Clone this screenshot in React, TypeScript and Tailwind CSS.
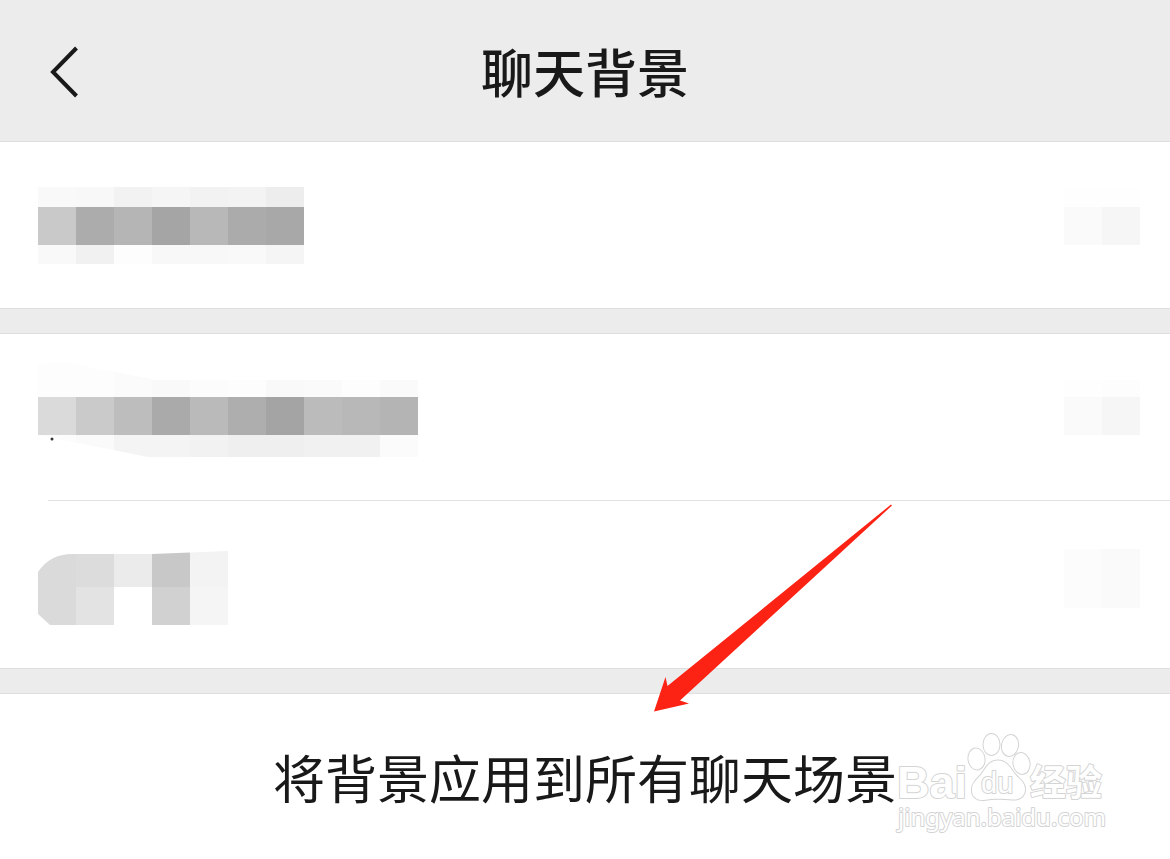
import React from 'react';

type Cell = [x: number, y: number, width: number, height: number, fill: string];

// Lays a line of 38px cells, one per colour
const strip = (x: number, y: number, height: number, fills: string[]): Cell[] =>
  fills.map((fill, i) => [x + i * 38, y, 38, height, fill]);

const albumLabel: Cell[] = [
  ...strip(0, 19, 20, ['#f9f9f9', '#f8f8f8', '#f2f2f2', '#f5f5f5', '#f2f2f2', '#f3f3f3', '#ededed']),
  ...strip(0, 39, 38, ['#c9c9c9', '#acacac', '#b5b5b5', '#a5a5a5', '#b8b8b8', '#ababab', '#a8a8a8']),
  ...strip(0, 77, 19, ['#f9f9f9', '#f1f1f1', '#fdfdfd', '#f8f8f8', '#f8f8f8', '#f9f9f9', '#f5f5f5']),
];

const photoLabel: Cell[] = [
  ...strip(0, 0, 37, ['#fdfdfd', '#fdfdfd', '#fbfbfb']),
  ...strip(114, 20, 17, ['#f9f9f9', '#fcfcfc', '#fdfdfd', '#f9f9f9', '#fafafa', '#fdfdfd', '#fafafa']),
  ...strip(0, 37, 38, [
    '#dadada', '#cacaca', '#bdbdbd', '#aaaaaa', '#bababa',
    '#aeaeae', '#a4a4a4', '#bbbbbb', '#b8b8b8', '#b4b4b4',
  ]),
  ...strip(0, 75, 22, [
    '#fcfcfc', '#fafafa', '#f4f4f4', '#f4f4f4', '#f2f2f2',
    '#efefef', '#efefef', '#f1f1f1', '#f1f1f1', '#fbfbfb',
  ]),
];

const cameraLabel: Cell[] = [
  ...strip(0, 24, 36, ['#dadada', '#dcdcdc', '#ebebeb', '#c8c8c8', '#f3f3f3']),
  ...strip(0, 60, 38, ['#dadada', '#e3e3e3', '#ffffff', '#d1d1d1', '#f5f5f5']),
];

const Mosaic: React.FC<{
  cells: Cell[];
  width: number;
  height?: number;
  clip?: string;
  id?: string;
  children?: React.ReactNode;
}> = ({ cells, width, height = 114, clip, id, children }) => (
  <svg width={width} height={height} viewBox={`0 0 ${width} ${height}`} className="shrink-0" aria-hidden="true">
    {clip && (
      <clipPath id={id}>
        <path d={clip} />
      </clipPath>
    )}
    <g clipPath={clip ? `url(#${id})` : undefined} shapeRendering="crispEdges">
      {cells.map(([x, y, w, h, fill]) => (
        <rect key={`${x}-${y}`} x={x} y={y} width={w} height={h} fill={fill} />
      ))}
    </g>
    {children}
  </svg>
);

const Row: React.FC<{ children: React.ReactNode }> = ({ children }) => (
  <li className="flex items-center justify-between py-[26px] pr-[30px] pl-[38px]">{children}</li>
);

const Divider: React.FC = () => <div className="h-[26px] border-y border-[#dedede] bg-[#ececec]" />;

const Arrow: React.FC = () => (
  <svg
    width="240"
    height="210"
    viewBox="0 0 240 210"
    className="pointer-events-none absolute top-[503px] left-1/2 ml-[68px]"
    aria-hidden="true"
  >
    <path d="M1 208.5 L12.5 174 L14.5 183 L238 1.5 L239 2.5 L27 197.5 L36 200.5 Z" fill="#fc2214" />
  </svg>
);

const Watermark: React.FC = () => (
  <svg
    width="216"
    height="106"
    viewBox="0 0 216 106"
    className="pointer-events-none absolute right-[62px] bottom-[22px]"
    fill="#ffffff"
    stroke="#d4d4d4"
    strokeWidth="2"
    strokeLinejoin="round"
    style={{ paintOrder: 'stroke' }}
  >
    <text x="5" y="67" fontSize="45" fontWeight="700" fontFamily='"Liberation Sans", Arial, sans-serif'>
      Bai
    </text>
    <g>
      <ellipse cx="84.5" cy="28" rx="8" ry="10.5" transform="rotate(-8 84.5 28)" />
      <ellipse cx="99.5" cy="13.5" rx="8" ry="10.5" />
      <ellipse cx="118" cy="14.5" rx="8" ry="10.5" transform="rotate(12 118 14.5)" />
      <ellipse cx="129.5" cy="32.500" rx="8" ry="10.5" transform="rotate(-10 129.5 32.5)" />
      <path d="M106 29.500 C114 29.500 118 36 122 42 C127 48 133 51 133 58 C133 66 127 69 120 68.500 C112 67.500 100 67.500 92 69 C85 69.500 79.500 66 80 58 C80 51 87 47 91 41 C95 35 98 29.500 106 29.500 Z" />
    </g>
    <text x="89" y="62" fontSize="29" fontFamily='"Liberation Sans", Arial, sans-serif'>
      du
    </text>
    <text x="138" y="65" fontSize="36" fontWeight="700" fontFamily='"Noto Sans CJK SC", sans-serif'>
      经验
    </text>
    <text x="6" y="95" fontSize="24" fontFamily='"Noto Sans", sans-serif'>
      jingyan.baidu.com
    </text>
  </svg>
);

export default function App() {
  return (
    <div className="relative min-h-screen overflow-hidden bg-white font-['Noto_Sans_CJK_SC',sans-serif] text-[#191919]">
      <header className="grid grid-cols-[1fr_auto_1fr] items-center border-b border-[#dedede] bg-[#ececec] py-8">
        <button type="button" aria-label="返回" className="ml-12 w-8">
          <svg width="32" height="56" viewBox="0 0 32 56" fill="none" stroke="currentColor" strokeWidth="4">
            <path d="M28.500 5 L5 29 L28.500 53" />
          </svg>
        </button>
        <h1 className="text-[52px] leading-[77px] font-medium">聊天背景</h1>
      </header>

      <ul>
        <Row>
          <Mosaic cells={albumLabel} width={266} />
          <Mosaic cells={[...strip(0, 21, 18, ['#fefefe', '#fefefe']), ...strip(0, 39, 38, ['#fafafa', '#f6f6f6'])]} width={76} />
        </Row>
      </ul>

      <Divider />

      <ul>
        <Row>
          <Mosaic
            cells={photoLabel}
            width={380}
            id="photo-label"
            clip="M0 5 Q18 -2 46 6 L114 19 L380 20 V97 H110 L40 83 L0 75 Z"
          >
            <circle cx="14" cy="79" r="1.5" fill="#333333" />
          </Mosaic>
          <Mosaic cells={[...strip(0, 20, 17, ['#fefefe', '#fdfdfd']), ...strip(0, 37, 38, ['#fafafa', '#f6f6f6'])]} width={76} />
        </Row>
        <li className="ml-12 border-t border-[#e2e2e2]" role="separator" />
        <Row>
          <Mosaic
            cells={cameraLabel}
            width={190}
            height={115}
            id="camera-label"
            clip="M0 45 Q12 27 34 27 L114 27 L190 24 V98 H12 L0 87 Z"
          />
          <Mosaic cells={strip(0, 21, 59, ['#fcfcfc', '#fafafa'])} width={76} />
        </Row>
      </ul>

      <Divider />

      <button type="button" className="block w-full py-11 text-center text-[52px] leading-[77px]">
        将背景应用到所有聊天场景
      </button>

      <Arrow />
      <Watermark />
    </div>
  );
}
